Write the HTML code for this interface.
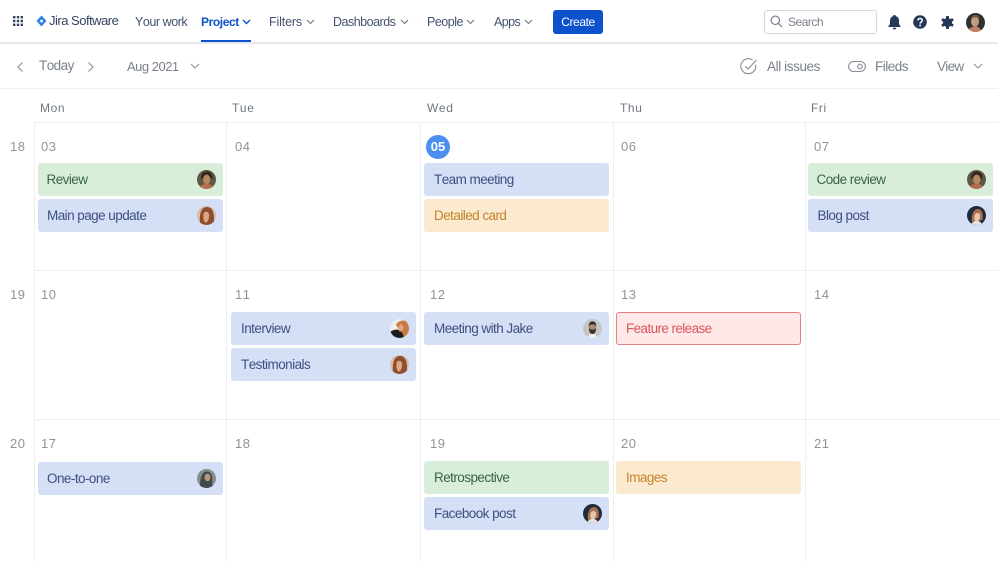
<!DOCTYPE html>
<html><head><meta charset="utf-8"><style>
html,body{margin:0;padding:0;background:#fff}
#p{position:relative;width:998px;height:562px;overflow:hidden;background:#fff;font-family:"Liberation Sans",sans-serif;font-kerning:none}
#p div,#p span.t,#p svg{position:absolute}
.t{white-space:nowrap;line-height:16px}
.n{font-size:12.5px;color:#42526e;top:14px;letter-spacing:-.45px}
.tb{font-size:13.5px;color:#7a808c;top:59px;letter-spacing:-.5px}
.d{font-size:12px;color:#6f7680;top:100px;letter-spacing:.6px}
.num{font-size:13px;color:#8f949b;letter-spacing:.5px}
.c{width:185px;height:33px;border-radius:3px;font-size:13.5px;letter-spacing:-.55px;line-height:33px;text-indent:10px;white-space:nowrap}
.b{background:#d5dff6;color:#3d5080}
.g{background:#d9eeda;color:#3a6346}
.o{background:#fbe9d0;color:#c4832a}
.l{background:#eeeff0}
.a{width:19px;height:19px;top:7px;left:159px}
</style></head><body><div id="p">

<svg width="0" height="0" style="left:0;top:0">
<symbol id="a1" viewBox="0 0 19 19"><clipPath id="c1"><circle cx="9.500" cy="9.500" r="9.500"/></clipPath><g clip-path="url(#c1)"><rect width="19" height="19" fill="#5e5743"/><path d="M4 9C4 3 7 1.500 10 1.500S16 4 15.500 10L13 7H7Z" fill="#33261f"/><ellipse cx="9.700" cy="9.500" rx="3.600" ry="5" fill="#b98560"/><path d="M2 19c1-4 4-5 7.500-5s6.500 1 7.500 5Z" fill="#b56d4f"/></g></symbol>
<symbol id="a2" viewBox="0 0 19 19"><clipPath id="c2"><circle cx="9.500" cy="9.500" r="9.500"/></clipPath><g clip-path="url(#c2)"><rect width="19" height="19" fill="#d8bda8"/><path d="M3 19C2 8 4 1 10 1s8 7 6.500 18Z" fill="#8e4f30"/><path d="M6.500 8C7 5 11 5 12 8c.5 4-1 8-3 8.500S6 12 6.500 8Z" fill="#dca784"/></g></symbol>
<symbol id="a3" viewBox="0 0 19 19"><clipPath id="c3"><circle cx="9.500" cy="9.500" r="9.500"/></clipPath><g clip-path="url(#c3)"><rect width="19" height="19" fill="#1f2b3a"/><path d="M5 16C4 8 7 3 11 3s5.500 5 4.500 11Z" fill="#a9714d"/><path d="M7.500 10C8 6.500 12 6 13 9c.5 3-1 6-3 6.500S7 13 7.500 10Z" fill="#e6c8b2"/><path d="M4 19c1-3 3-4 6-4s4 1 5 4Z" fill="#e9e2dc"/></g></symbol>
<symbol id="a4" viewBox="0 0 19 19"><clipPath id="c4"><circle cx="9.500" cy="9.500" r="9.500"/></clipPath><g clip-path="url(#c4)"><rect width="19" height="19" fill="#eeeeea"/><path d="M6 6C8 1 16 0 19 4v15H8c-1-4 2-6 1-9Z" fill="#c77a42"/><path d="M0 13c3-2 6-3 9-2 2 1 4 3 5 8H0Z" fill="#1c1c1e"/><path d="M10 5c3 0 4 3 3 6l-3 2-2-3Z" fill="#e0a77f"/></g></symbol>
<symbol id="a5" viewBox="0 0 19 19"><clipPath id="c5"><circle cx="9.500" cy="9.500" r="9.500"/></clipPath><g clip-path="url(#c5)"><rect width="19" height="19" fill="#c4c6c6"/><path d="M5 19c.5-3 2-4 4.500-4s4 1 4.500 4Z" fill="#f2f2f0"/><ellipse cx="9.500" cy="8.500" rx="3.700" ry="5" fill="#a58b78"/><path d="M5.800 8C5.500 3 8 2.500 9.500 2.500s4 .5 3.700 5.500L12 5.500H7Z" fill="#312a26"/><path d="M6 9l1.500 1.500h4L13 9c.3 4-1.500 6-3.500 6S5.700 13 6 9Z" fill="#3a322c"/></g></symbol>
<symbol id="a6" viewBox="0 0 19 19"><clipPath id="c6"><circle cx="9.500" cy="9.500" r="9.500"/></clipPath><g clip-path="url(#c6)"><rect width="19" height="19" fill="#8a8d88"/><path d="M3 19C3 8 5 2.500 10 2.500S16 9 15 15l2 4Z" fill="#3e4a50"/><ellipse cx="10.500" cy="8.500" rx="3" ry="3.800" fill="#b89878"/></g></symbol>
<symbol id="a7" viewBox="0 0 19 19"><clipPath id="c7"><circle cx="9.500" cy="9.500" r="9.500"/></clipPath><g clip-path="url(#c7)"><rect width="19" height="19" fill="#2f3130"/><ellipse cx="9" cy="8.500" rx="4" ry="5.200" fill="#c39c7e"/><path d="M5 6c.5-3.500 3-4 5-4s3.500 1.500 3.500 4L11 4.500H7Z" fill="#6e5a42"/><path d="M1 19c2-4 5-5.500 8-5.500s5.500 1.500 7 5.500Z" fill="#bd8060"/></g></symbol>
</svg>

<!-- grid lines -->
<div style="left:0;top:42px;width:998px;height:2px;background:#e6e8ec"></div>
<div class="l" style="left:0;top:88px;width:998px;height:1px"></div>
<div class="l" style="left:34px;top:122px;width:964px;height:1px"></div>
<div class="l" style="left:34px;top:270px;width:964px;height:1px"></div>
<div class="l" style="left:34px;top:419px;width:964px;height:1px"></div>
<div class="l" style="left:34px;top:122px;width:1px;height:440px"></div>
<div class="l" style="left:226px;top:122px;width:1px;height:440px"></div>
<div class="l" style="left:420px;top:122px;width:1px;height:440px"></div>
<div class="l" style="left:613px;top:122px;width:1px;height:440px"></div>
<div class="l" style="left:805px;top:122px;width:1px;height:440px"></div>

<!-- nav -->
<svg style="left:13px;top:16px" width="10" height="10" viewBox="0 0 10 10" fill="#344563"><rect x="0" y="0" width="2.400" height="2.400"/><rect x="3.800" y="0" width="2.400" height="2.400"/><rect x="7.600" y="0" width="2.400" height="2.400"/><rect x="0" y="3.800" width="2.400" height="2.400"/><rect x="3.800" y="3.800" width="2.400" height="2.400"/><rect x="7.600" y="3.800" width="2.400" height="2.400"/><rect x="0" y="7.600" width="2.400" height="2.400"/><rect x="3.800" y="7.600" width="2.400" height="2.400"/><rect x="7.600" y="7.600" width="2.400" height="2.400"/></svg>
<svg style="left:36px;top:15px" width="11" height="12" viewBox="0 0 11 12"><path d="M5.500 .5 10.500 6 5.500 11.500 .5 6Z" fill="#2f7fe8"/><path d="M5.500 4.200 7.300 6 5.500 7.800 3.700 6Z" fill="#fff"/></svg>
<span class="t" style="left:49px;top:13px;font-size:13px;color:#344563;letter-spacing:-.5px">Jira Software</span>
<span class="t n" style="left:135px">Your work</span>
<span class="t n" style="left:201px;color:#0b52cc;font-weight:bold;font-size:12px;letter-spacing:-.4px">Project</span>
<div style="left:201px;top:40px;width:50px;height:2px;background:#0b52cc"></div>
<svg style="left:242px;top:19px" width="9" height="6" viewBox="0 0 9 6" fill="none" stroke="#0b52cc" stroke-width="1.400"><path d="M1 1l3.500 3.500L8 1"/></svg>
<span class="t n" style="left:269px;letter-spacing:-.15px">Filters</span>
<svg style="left:306px;top:19px" width="9" height="6" viewBox="0 0 9 6" fill="none" stroke="#6b7585" stroke-width="1.100"><path d="M1 1l3.500 3.500L8 1"/></svg>
<span class="t n" style="left:333px;letter-spacing:-.5px">Dashboards</span>
<svg style="left:400px;top:19px" width="9" height="6" viewBox="0 0 9 6" fill="none" stroke="#6b7585" stroke-width="1.100"><path d="M1 1l3.500 3.500L8 1"/></svg>
<span class="t n" style="left:427px;letter-spacing:-.5px">People</span>
<svg style="left:466px;top:19px" width="9" height="6" viewBox="0 0 9 6" fill="none" stroke="#6b7585" stroke-width="1.100"><path d="M1 1l3.500 3.500L8 1"/></svg>
<span class="t n" style="left:494px;letter-spacing:-.6px">Apps</span>
<svg style="left:524px;top:19px" width="9" height="6" viewBox="0 0 9 6" fill="none" stroke="#6b7585" stroke-width="1.100"><path d="M1 1l3.500 3.500L8 1"/></svg>
<div style="left:553px;top:10px;width:50px;height:24px;background:#0b52cc;border-radius:3px;color:#fff;font-size:12px;letter-spacing:-.4px;line-height:24px;text-align:center">Create</div>

<div style="left:764px;top:10px;width:111px;height:22px;border:1px solid #d5d8dd;border-radius:3px"></div>
<svg style="left:770px;top:15px" width="13" height="13" viewBox="0 0 13 13" fill="none" stroke="#6b7585" stroke-width="1.100"><circle cx="5.300" cy="5.300" r="4.200"/><path d="M8.400 8.400l3.600 3.600"/></svg>
<span class="t" style="left:788px;top:14px;font-size:12px;letter-spacing:-.5px;color:#7a808c">Search</span>
<svg style="left:888px;top:15px" width="13" height="15" viewBox="0 0 13 15" fill="#253858"><path d="M6.500 0C7.400 0 7.900 .6 8 1.300 10 2 11 3.600 11 5.600V9l1.600 2.200c.2 .4 0 .8-.5 .8H.9c-.5 0-.7-.4-.5-.8L2 9V5.600C2 3.600 3 2 5 1.300 5.100 .6 5.600 0 6.500 0Z"/><path d="M4.700 12.800h3.600c0 1-.8 1.700-1.800 1.700s-1.800-.7-1.800-1.700Z"/></svg>
<svg style="left:913px;top:15px" width="14" height="14" viewBox="0 0 14 14"><circle cx="7" cy="7" r="6.800" fill="#253858"/><path d="M4.900 5.400C5 4.200 5.900 3.500 7.100 3.500c1.300 0 2.200 .8 2.200 1.900 0 1.700-2.200 1.700-2.200 3.200" fill="none" stroke="#fff" stroke-width="1.500"/><circle cx="7.100" cy="10.500" r=".95" fill="#fff"/></svg>
<svg style="left:941px;top:16px" width="13" height="13" viewBox="0 0 14 14"><g fill="#253858"><rect x="5.400" y="0" width="3.200" height="14" rx=".8"/><rect x="5.400" y="0" width="3.200" height="14" rx=".8" transform="rotate(60 7 7)"/><rect x="5.400" y="0" width="3.200" height="14" rx=".8" transform="rotate(120 7 7)"/></g><circle cx="7" cy="7" r="3.600" fill="none" stroke="#253858" stroke-width="2.600"/></svg>
<svg style="left:966px;top:13px" width="19" height="19"><use href="#a7"/></svg>

<!-- toolbar -->
<svg style="left:16px;top:61px" width="8" height="12" viewBox="0 0 8 12" fill="none" stroke="#8f949b" stroke-width="1.200"><path d="M6.500 1.500 2 6l4.500 4.500"/></svg>
<span class="t tb" style="left:39px;top:58px;letter-spacing:-.55px">Today</span>
<svg style="left:87px;top:61px" width="8" height="12" viewBox="0 0 8 12" fill="none" stroke="#8f949b" stroke-width="1.200"><path d="M1.500 1.500 6 6l-4.500 4.500"/></svg>
<span class="t tb" style="left:127px;font-size:13px">Aug 2021</span>
<svg style="left:190px;top:63px" width="10" height="7" viewBox="0 0 10 7" fill="none" stroke="#8f949b" stroke-width="1.100"><path d="M1 1l4 4 4-4"/></svg>
<svg style="left:740px;top:58px" width="18" height="17" viewBox="0 0 18 17" fill="none" stroke="#8a8f98" stroke-width="1.100"><path d="M15.600 6.500A7.500 7.500 0 1 1 12.500 2"/><path d="M5.300 8.300 8 11 16.500 2"/></svg>
<span class="t tb" style="left:767px;letter-spacing:-.4px">All issues</span>
<svg style="left:848px;top:60px" width="18" height="13" viewBox="0 0 18 13" fill="none" stroke="#8a8f98" stroke-width="1.100"><rect x=".6" y="1.500" width="16.800" height="10" rx="5"/><circle cx="12" cy="6.500" r="2.300"/></svg>
<span class="t tb" style="left:875px">Fileds</span>
<span class="t tb" style="left:937px;letter-spacing:-.7px">View</span>
<svg style="left:973px;top:63px" width="10" height="7" viewBox="0 0 10 7" fill="none" stroke="#8f949b" stroke-width="1.100"><path d="M1 1l4 4 4-4"/></svg>

<!-- days -->
<span class="t d" style="left:40px">Mon</span>
<span class="t d" style="left:232px">Tue</span>
<span class="t d" style="left:427px">Wed</span>
<span class="t d" style="left:620px">Thu</span>
<span class="t d" style="left:811px">Fri</span>

<!-- week numbers -->
<span class="t num" style="left:10px;top:139px">18</span>
<span class="t num" style="left:10px;top:287px">19</span>
<span class="t num" style="left:10px;top:436px">20</span>

<!-- dates -->
<span class="t num" style="left:41px;top:139px">03</span>
<span class="t num" style="left:235px;top:139px">04</span>
<div style="left:426px;top:135px;width:24px;height:24px;border-radius:50%;background:#4c8fef;color:#fff;font-size:13px;font-weight:bold;line-height:24px;text-align:center">05</div>
<span class="t num" style="left:621px;top:139px">06</span>
<span class="t num" style="left:814px;top:139px">07</span>
<span class="t num" style="left:41px;top:287px">10</span>
<span class="t num" style="left:235px;top:287px">11</span>
<span class="t num" style="left:430px;top:287px">12</span>
<span class="t num" style="left:621px;top:287px">13</span>
<span class="t num" style="left:814px;top:287px">14</span>
<span class="t num" style="left:41px;top:436px">17</span>
<span class="t num" style="left:235px;top:436px">18</span>
<span class="t num" style="left:430px;top:436px">19</span>
<span class="t num" style="left:621px;top:436px">20</span>
<span class="t num" style="left:814px;top:436px">21</span>

<!-- cards -->
<div class="c g" style="left:38px;top:163px;text-indent:8.500px">Review<svg class="a" width="19" height="19"><use href="#a1"/></svg></div>
<div class="c b" style="left:38px;top:199px;text-indent:9px">Main page update<svg class="a" width="19" height="19"><use href="#a2"/></svg></div>
<div class="c b" style="left:424px;top:163px">Team meeting</div>
<div class="c o" style="left:424px;top:199px">Detailed card</div>
<div class="c g" style="left:808px;top:163px;text-indent:8.500px">Code review<svg class="a" width="19" height="19"><use href="#a1"/></svg></div>
<div class="c b" style="left:808px;top:199px;text-indent:9.500px">Blog post<svg class="a" width="19" height="19"><use href="#a3"/></svg></div>

<div class="c b" style="left:231px;top:312px">Interview<svg class="a" width="19" height="19"><use href="#a4"/></svg></div>
<div class="c b" style="left:231px;top:348px">Testimonials<svg class="a" width="19" height="19"><use href="#a2"/></svg></div>
<div class="c b" style="left:424px;top:312px">Meeting with Jake<svg class="a" width="19" height="19"><use href="#a5"/></svg></div>
<div style="left:616px;top:312px;width:183px;height:31px;background:#ffe9e8;border:1px solid #e38084;border-radius:3px;color:#d9565c;font-size:13.500px;letter-spacing:-.6px;line-height:31px;text-indent:9px;white-space:nowrap">Feature release</div>

<div class="c b" style="left:38px;top:462px;text-indent:9px">One-to-one<svg class="a" width="19" height="19"><use href="#a6"/></svg></div>
<div class="c g" style="left:424px;top:461px">Retrospective</div>
<div class="c b" style="left:424px;top:497px">Facebook post<svg class="a" width="19" height="19"><use href="#a3"/></svg></div>
<div class="c o" style="left:616px;top:461px">Images</div>

</div></body></html>
